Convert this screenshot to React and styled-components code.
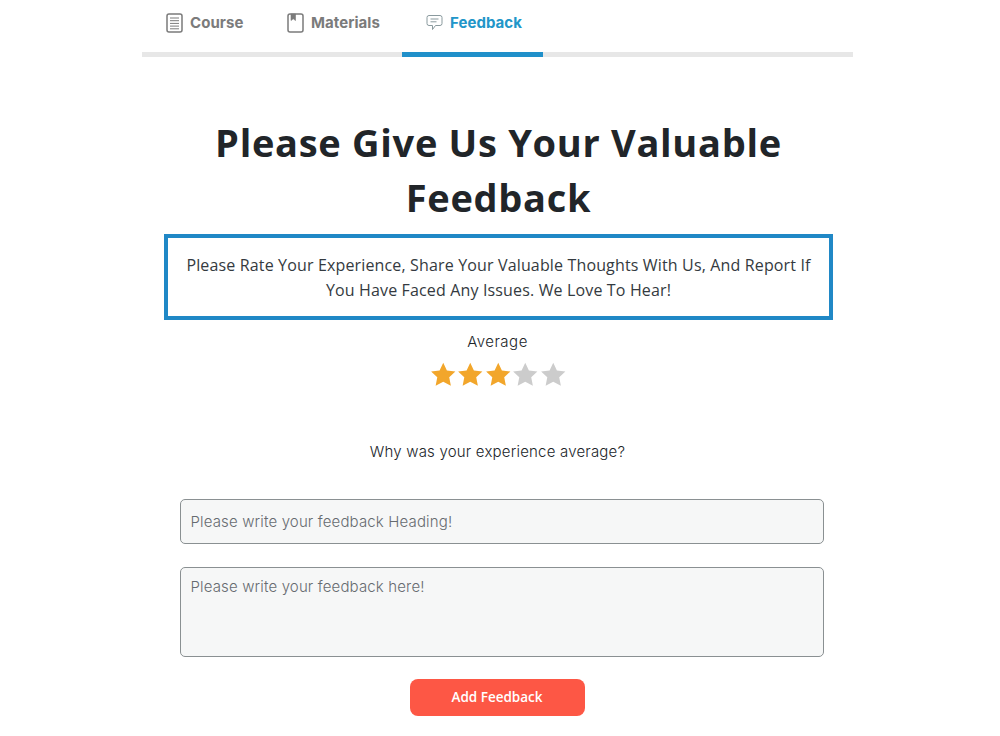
import styled, { createGlobalStyle } from "styled-components";

const GlobalStyle = createGlobalStyle`
  html, body {
    margin: 0;
    padding: 0;
    background: #fff;
  }
  * {
    box-sizing: border-box;
  }
`;

const CourseIcon = () => (
  <svg width="17" height="20" viewBox="0 0 17 20" fill="none" stroke="currentColor">
    <rect x="1" y="1" width="15" height="18" rx="2" strokeWidth="1.5" />
    <path d="M4 5h9M4 7.7h9M4 10.4h9M4 13.1h9M4 15.8h9" strokeWidth="1" />
  </svg>
);

const MaterialsIcon = () => (
  <svg width="17" height="20" viewBox="0 0 17 20" fill="none" stroke="currentColor">
    <rect x="1" y="1" width="15" height="18" rx="2" strokeWidth="1.5" />
    <path d="M4 1h4.5v6.5L6.2 5.8 4 7.5z" fill="currentColor" strokeWidth="0.6" />
  </svg>
);

const FeedbackIcon = () => (
  <svg width="17" height="20" viewBox="0 0 17 20" fill="none" stroke="currentColor">
    <path
      d="M3 2.5h11a2 2 0 0 1 2 2v6a2 2 0 0 1-2 2H9.5L6.5 16.5v-4H3a2 2 0 0 1-2-2v-6a2 2 0 0 1 2-2z"
      strokeWidth="1"
    />
    <path d="M4.5 6h8M4.5 8.8h6" strokeWidth="1" />
  </svg>
);

const Star = ({ on }) => (
  <StarMark viewBox="0 0 24 24" $on={on}>
    <path d="M12 1.5l3.3 7 7.7 1-5.6 5.3 1.5 7.7-6.9-3.8-6.9 3.8 1.5-7.7L1 9.5l7.7-1z" />
  </StarMark>
);

const App = () => {
  return (
    <Page>
      <GlobalStyle />
      <Tabs>
        <Tab $width={121}>
          <CourseIcon />
          Course
        </Tab>
        <Tab $width={139}>
          <MaterialsIcon />
          Materials
        </Tab>
        <Tab $width={141} $active>
          <FeedbackIcon />
          Feedback
        </Tab>
      </Tabs>

      <Content>
        <Title>Please Give Us Your Valuable Feedback</Title>
        <Intro>
          Please Rate Your Experience, Share Your Valuable Thoughts With Us, And
          Report If You Have Faced Any Issues. We Love To Hear!
        </Intro>
        <RatingLabel>Average</RatingLabel>
        <Stars>
          {[1, 2, 3, 4, 5].map((n) => (
            <Star key={n} on={n <= 3} />
          ))}
        </Stars>
        <Question>Why was your experience average?</Question>
        <Form>
          <HeadingInput placeholder="Please write your feedback Heading!" />
          <BodyInput placeholder="Please write your feedback here!" />
          <Submit type="button">Add Feedback</Submit>
        </Form>
      </Content>
    </Page>
  );
};

const Page = styled.div`
  width: 1000px;
  height: 736px;
  overflow: hidden;
  background: #fff;
  padding-left: 142px;
  font-family: "Open Sans", sans-serif;
`;

const Tabs = styled.div`
  width: 711px;
  height: 57px;
  display: flex;
  border-bottom: 5px solid #e7e7e7;
`;

const Tab = styled.div`
  flex: 0 0 ${(p) => p.$width}px;
  height: 57px;
  padding: 13px 0 0 24px;
  display: flex;
  align-items: flex-start;
  gap: 7px;
  font-family: Inter, sans-serif;
  font-size: 15px;
  font-weight: 700;
  letter-spacing: 0.05px;
  line-height: 20px;
  color: ${(p) => (p.$active ? "#2196c9" : "#7b7b7b")};
  border-bottom: 5px solid ${(p) => (p.$active ? "#2090ca" : "transparent")};

  svg {
    flex-shrink: 0;
    color: ${(p) => (p.$active ? "#8a9a9e" : "#7b7b7b")};
  }
`;

const Content = styled.div`
  width: 711px;
  padding-left: 22px;
  padding-right: 20px;
  display: flex;
  flex-direction: column;
  align-items: center;
`;

const Title = styled.h1`
  width: 620px;
  margin: 58px 0 9px;
  text-align: center;
  font-family: "Open Sans", sans-serif;
  font-size: 38px;
  font-weight: 700;
  letter-spacing: 0.7px;
  line-height: 55px;
  color: #212529;
`;

const Intro = styled.p`
  width: 669px;
  height: 86px;
  margin: 0;
  padding: 15px 16px;
  border: 4px solid #2088c6;
  text-align: center;
  font-size: 16px;
  letter-spacing: 0.15px;
  line-height: 25px;
  color: #343a40;
`;

const RatingLabel = styled.div`
  margin-top: 12px;
  margin-right: 2px;
  font-family: Inter, sans-serif;
  font-size: 15px;
  font-weight: 300;
  letter-spacing: 0.5px;
  line-height: 20px;
  color: #212529;
`;

const Stars = styled.div`
  margin-top: 9px;
  margin-right: 1px;
  display: flex;
  gap: 1px;
`;

const StarMark = styled.svg`
  width: 26.5px;
  height: 26.5px;
  fill: ${(p) => (p.$on ? "#f2a62b" : "#cccccc")};
`;

const Question = styled.div`
  margin-top: 54px;
  margin-right: 2px;
  font-family: Inter, sans-serif;
  font-size: 15px;
  font-weight: 300;
  letter-spacing: 0.2px;
  line-height: 20px;
  color: #212529;
`;

const Form = styled.form`
  width: 644px;
  margin-top: 37px;
  margin-left: 6px;
  display: flex;
  flex-direction: column;
  align-items: center;
`;

const HeadingInput = styled.input`
  width: 100%;
  height: 45px;
  padding: 0 10px;
  background: #f6f7f7;
  border: 1px solid #8a9092;
  border-radius: 5px;
  outline: none;
  font-family: Inter, sans-serif;
  font-size: 15px;
  font-weight: 300;
  letter-spacing: 0.15px;
  color: #343a40;

  &::placeholder {
    color: #666b70;
    opacity: 1;
  }
`;

const BodyInput = styled.textarea`
  width: 100%;
  height: 90px;
  margin-top: 23px;
  padding: 9px 10px;
  display: block;
  resize: none;
  background: #f6f7f7;
  border: 1px solid #8a9092;
  border-radius: 5px;
  outline: none;
  font-family: Inter, sans-serif;
  font-size: 15px;
  font-weight: 300;
  letter-spacing: 0.15px;
  line-height: 20px;
  color: #343a40;

  &::placeholder {
    color: #666b70;
    opacity: 1;
  }
`;

const Submit = styled.button`
  width: 175px;
  height: 37px;
  margin-top: 22px;
  margin-right: 9px;
  background: #fd5745;
  border: none;
  border-radius: 8px;
  font-family: "Open Sans", sans-serif;
  font-size: 13.5px;
  font-weight: 600;
  color: #fff;
  cursor: pointer;
`;

export default App;
